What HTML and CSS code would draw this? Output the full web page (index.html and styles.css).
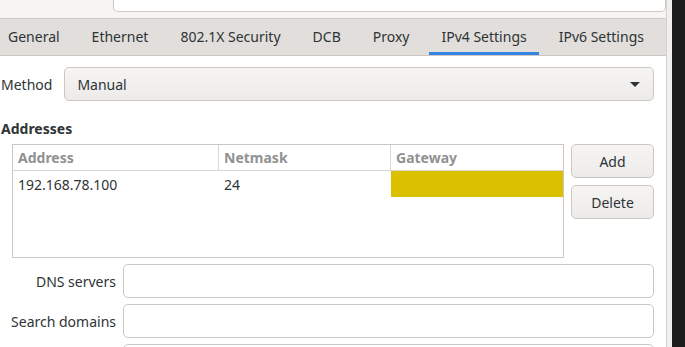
FILE: index.html
```html
<!DOCTYPE html>
<html lang="en">

<head>
    <meta charset="UTF-8">
    <title>IPv4 Settings</title>
    <link rel="stylesheet" href="styles.css">
</head>

<body>
    <div class="screen">
        <div class="window">
            <div class="top">
                <div class="top-entry"></div>
            </div>

            <div class="tabs">
                <span class="tab">General</span>
                <span class="tab">Ethernet</span>
                <span class="tab">802.1X Security</span>
                <span class="tab">DCB</span>
                <span class="tab">Proxy</span>
                <span class="tab active">IPv4 Settings</span>
                <span class="tab">IPv6 Settings</span>
            </div>

            <div class="page">
                <div class="method-row">
                    <span class="label">Method</span>
                    <div class="combo">
                        <span>Manual</span>
                        <span class="arrow"></span>
                    </div>
                </div>

                <h3 class="section">Addresses</h3>

                <div class="addresses">
                    <div class="table">
                        <div class="cell head">Address</div>
                        <div class="cell head">Netmask</div>
                        <div class="cell head last">Gateway</div>
                        <div class="cell">192.168.78.100</div>
                        <div class="cell">24</div>
                        <div class="cell edit last"></div>
                    </div>
                    <div class="side-buttons">
                        <button class="btn">Add</button>
                        <button class="btn">Delete</button>
                    </div>
                </div>

                <div class="fields">
                    <span class="field-label">DNS servers</span>
                    <div class="entry"></div>
                    <span class="field-label">Search domains</span>
                    <div class="entry"></div>
                    <span class="field-label"></span>
                    <div class="entry"></div>
                </div>
            </div>
        </div>
        <div class="edge"></div>
    </div>
</body>

</html>
```

FILE: styles.css
```css
* {
    box-sizing: border-box;
}

body {
    margin: 0;
    height: 347px;
    overflow: hidden;
    font-family: "Noto Sans", sans-serif;
    font-size: 14px;
    color: #2e3436;
    background-color: #1c1c1c;
}

.screen {
    display: flex;
    height: 347px;
}

.window {
    width: 667px;
    flex-shrink: 0;
    overflow: hidden;
    background-color: #ffffff;
    border-right: 1px solid #d6d1cd;
}

.edge {
    width: 5px;
    background-color: #f1efed;
}

.top {
    height: 18px;
    padding-left: 113px;
    background-color: #f6f5f4;
}

.top-entry {
    height: 12px;
    background-color: #ffffff;
    border: 1px solid #cdc7c2;
    border-top: none;
    border-radius: 0 0 5px 5px;
}

.tabs {
    display: flex;
    gap: 8px;
    height: 38px;
    margin-left: -4px;
    background-color: #e1dedb;
    border-top: 1px solid #cdc7c2;
    border-bottom: 1px solid #cdc7c2;
}

.tab {
    display: flex;
    align-items: center;
    flex-shrink: 0;
    white-space: nowrap;
    padding: 2px 12px 0;
    border-bottom: 3px solid transparent;
}

.tab.active {
    border-bottom-color: #3584e4;
}

.page {
    padding: 11px 12px 0 1px;
}

.method-row {
    display: flex;
    align-items: center;
    gap: 12px;
}

.combo {
    flex: 1;
    height: 34px;
    display: flex;
    align-items: center;
    justify-content: space-between;
    padding: 0 13px 0 12px;
    border: 1px solid #cdc7c2;
    border-radius: 5px;
    background: linear-gradient(#f6f5f4, #edebe9);
}

.arrow {
    width: 0;
    height: 0;
    border-left: 5px solid transparent;
    border-right: 5px solid transparent;
    border-top: 5px solid #2e3436;
}

.section {
    margin: 18px 0 6px;
    font-size: 14px;
    font-weight: bold;
}

.addresses {
    display: flex;
    gap: 7px;
    padding-left: 11px;
}

.table {
    width: 552px;
    height: 114px;
    display: grid;
    grid-template-columns: 206px 172px 1fr;
    grid-template-rows: 26px 26px;
    border: 1px solid #cdc7c2;
}

.cell {
    padding: 0 5px;
    display: flex;
    align-items: center;
}

.head {
    color: #919191;
    font-weight: bold;
    border-right: 1px solid #d9d5d1;
    border-bottom: 1px solid #d9d5d1;
}

.head.last {
    border-right: none;
}

.edit {
    background-color: #dbc000;
}

.side-buttons {
    display: flex;
    flex-direction: column;
    gap: 7px;
    flex: 1;
}

.btn {
    height: 34px;
    font: inherit;
    color: #2e3436;
    border: 1px solid #cdc7c2;
    border-radius: 5px;
    background: linear-gradient(#f6f5f4, #edebe9);
}

.fields {
    display: grid;
    grid-template-columns: 115px 1fr;
    column-gap: 7px;
    row-gap: 6px;
    margin-top: 6px;
}

.field-label {
    display: flex;
    align-items: center;
    justify-content: flex-end;
}

.entry {
    height: 34px;
    border: 1px solid #cdc7c2;
    border-radius: 5px;
    background-color: #ffffff;
}
```
